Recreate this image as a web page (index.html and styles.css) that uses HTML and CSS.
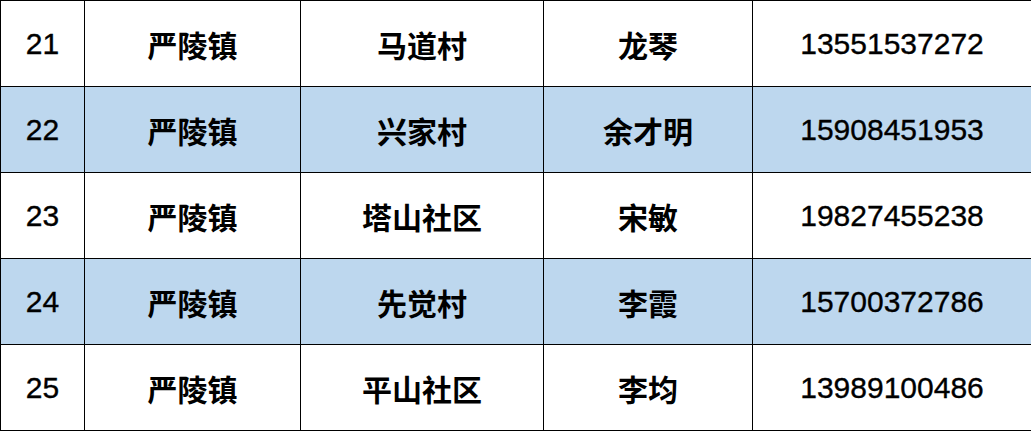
FILE: index.html
```html
<!DOCTYPE html>
<html lang="zh">
<head>
<meta charset="utf-8">
<link rel="stylesheet" href="styles.css">
</head>
<body>
<table class="grid">
  <colgroup>
    <col class="c1"><col class="c2"><col class="c3"><col class="c4"><col class="c5">
  </colgroup>
  <tr><td class="num">21</td><td class="zh">严陵镇</td><td class="zh">马道村</td><td class="zh">龙琴</td><td class="num">13551537272</td></tr>
  <tr class="alt"><td class="num">22</td><td class="zh">严陵镇</td><td class="zh">兴家村</td><td class="zh">余才明</td><td class="num">15908451953</td></tr>
  <tr><td class="num">23</td><td class="zh">严陵镇</td><td class="zh">塔山社区</td><td class="zh">宋敏</td><td class="num">19827455238</td></tr>
  <tr class="alt"><td class="num">24</td><td class="zh">严陵镇</td><td class="zh">先觉村</td><td class="zh">李霞</td><td class="num">15700372786</td></tr>
  <tr><td class="num">25</td><td class="zh">严陵镇</td><td class="zh">平山社区</td><td class="zh">李均</td><td class="num">13989100486</td></tr>
</table>
</body>
</html>
```
FILE: styles.css
```css
html, body {
  margin: 0;
  padding: 0;
  background: #ffffff;
}
.grid {
  border-collapse: collapse;
  table-layout: fixed;
  width: 1031px;
  font-family: "Liberation Sans", "Noto Sans CJK SC", sans-serif;
  color: #000;
}
.c1 { width: 84px; }
.c2 { width: 216px; }
.c3 { width: 243px; }
.c4 { width: 209px; }
.c5 { width: 279px; }
.grid td {
  border: 1px solid #000;
  height: 86px;
  padding: 0;
  text-align: center;
  vertical-align: middle;
  box-sizing: border-box;
}
.grid tr.alt td {
  background: #bdd7ee;
}
.num {
  font-size: 30px;
  font-weight: normal;
  -webkit-text-stroke: 0.35px #000;
}
.zh {
  font-family: "Noto Sans CJK SC", sans-serif;
  font-size: 30px;
  font-weight: bold;
}
```
